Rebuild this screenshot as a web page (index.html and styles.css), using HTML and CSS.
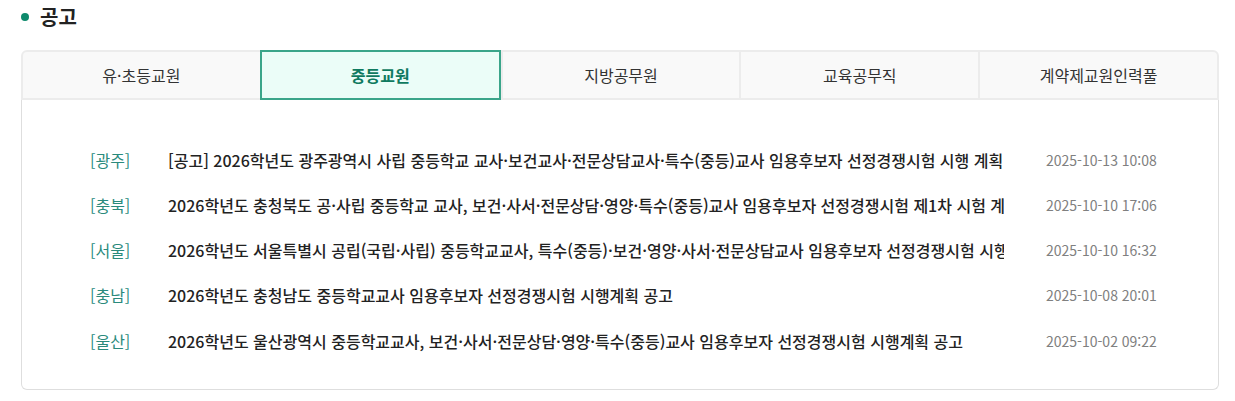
FILE: index.html
```html
<!DOCTYPE html>
<html lang="ko">
<head>
<meta charset="utf-8">
<link rel="stylesheet" href="styles.css">
</head>
<body>
<div class="wrap">
  <h2 class="title"><span class="dot"></span>공고</h2>
  <div class="board">
    <ul class="tabs">
      <li class="tab">유·초등교원</li>
      <li class="tab active">중등교원</li>
      <li class="tab">지방공무원</li>
      <li class="tab">교육공무직</li>
      <li class="tab">계약제교원인력풀</li>
    </ul>
    <div class="panel">
      <ul class="list">
        <li class="row"><span class="region">[광주]</span><span class="subject">[공고] 2026학년도 광주광역시 사립 중등학교 교사·보건교사·전문상담교사·특수(중등)교사 임용후보자 선정경쟁시험 시행 계획 공고</span><span class="date">2025-10-13 10:08</span></li>
        <li class="row"><span class="region">[충북]</span><span class="subject">2026학년도 충청북도 공·사립 중등학교 교사, 보건·사서·전문상담·영양·특수(중등)교사 임용후보자 선정경쟁시험 제1차 시험 계획 공고</span><span class="date">2025-10-10 17:06</span></li>
        <li class="row"><span class="region">[서울]</span><span class="subject">2026학년도 서울특별시 공립(국립·사립) 중등학교교사, 특수(중등)·보건·영양·사서·전문상담교사 임용후보자 선정경쟁시험 시행계획 공고</span><span class="date">2025-10-10 16:32</span></li>
        <li class="row"><span class="region">[충남]</span><span class="subject">2026학년도 충청남도 중등학교교사 임용후보자 선정경쟁시험 시행계획 공고</span><span class="date">2025-10-08 20:01</span></li>
        <li class="row"><span class="region">[울산]</span><span class="subject">2026학년도 울산광역시 중등학교교사, 보건·사서·전문상담·영양·특수(중등)교사 임용후보자 선정경쟁시험 시행계획 공고</span><span class="date">2025-10-02 09:22</span></li>
      </ul>
    </div>
  </div>
</div>
</body>
</html>
```

FILE: styles.css
```css
* { box-sizing: border-box; }
html, body { margin: 0; padding: 0; background: #fff; }
body {
  font-family: "Noto Sans CJK KR", "Noto Sans", sans-serif;
  color: #222;
}
.wrap { padding: 4px 16px 0 21px; width: 1235px; }
.title {
  margin: 0;
  display: flex;
  align-items: center;
  gap: 11px;
  font-size: 20px;
  font-weight: 700;
  line-height: 26px;
  color: #222;
  height: 26px;
}
.dot {
  width: 8px; height: 8px; border-radius: 50%;
  background: #0e8a6c;
  display: inline-block;
}
.board { margin-top: 20px; width: 1198px; }
.tabs {
  list-style: none; margin: 0; padding: 0;
  display: flex;
  height: 50px;
  border: 2px solid #ececec;
  border-radius: 6px 6px 0 0;
  background: #f9f9f9;
}
.tab {
  flex: 1 1 0;
  display: flex; align-items: center; justify-content: center;
  font-size: 16px;
  color: #333;
  border-left: 2px solid #ececec;
}
.tab:first-child { border-left: none; }
.tab.active {
  background: #ebfdf8;
  border: 2px solid #3aa58a;
  margin: -2px 0;
  color: #0f7a60;
  font-weight: 700;
}
.panel {
  border: 1px solid #dedede;
  border-top: none;
  border-radius: 0 0 6px 6px;
  padding: 37px 0 22px 68px;
  height: 290px;
}
.list { list-style: none; margin: 0; padding: 0; }
.row {
  display: flex; align-items: center;
  height: 45.25px;
  font-size: 16px;
  line-height: 24px;
}
.region { width: 78px; color: #2a8a7c; flex: none; }
.subject {
  width: 836px; flex: none;
  white-space: nowrap; overflow: hidden;
  color: #222; font-weight: 500;
}
.date {
  margin-left: 42px;
  font-size: 14px;
  color: #808080;
  white-space: nowrap;
}
```
